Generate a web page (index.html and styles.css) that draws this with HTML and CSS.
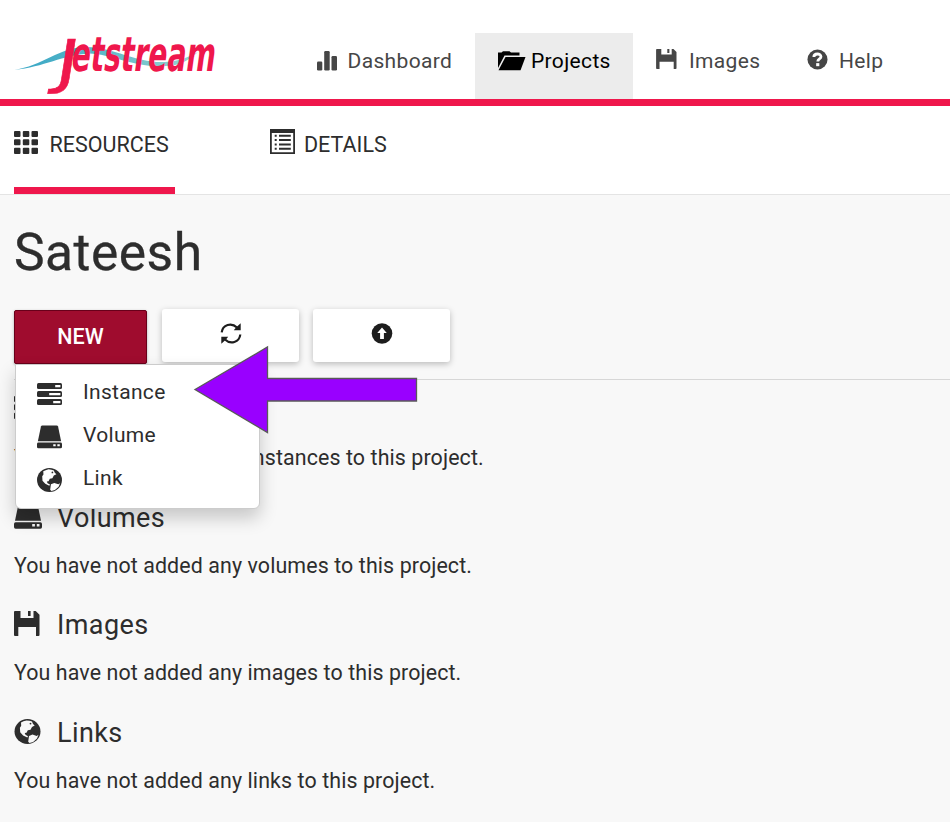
FILE: index.html
```html
<!DOCTYPE html>
<html lang="en">
<head>
<meta charset="utf-8">
<title>Jetstream - Projects</title>
<link rel="stylesheet" href="styles.css">
</head>
<body>
<svg class="sprite" aria-hidden="true">
  <symbol id="bars" viewBox="0 0 20 20"><rect x="0" y="10.5" width="5.3" height="9" rx="1.2"/><rect x="7.2" y="0" width="5.5" height="19.5" rx="1.2"/><rect x="14.5" y="5" width="5.5" height="14.5" rx="1.2"/></symbol>
  <symbol id="folder" viewBox="0 0 28 20"><path d="M0 17V1.5h3.5L5 .3h6.500l1.500 1.200h8.500V4.500H6.500z"/><path d="M7.500 6h20L22.500 19.300H.500z"/></symbol>
  <symbol id="floppy" viewBox="0 0 26 25"><path fill-rule="evenodd" d="M0 1Q0 0 1 0h5.500v7h13V0h2.200L25.500 3.800V24q0 1-1 1H22v-9H4.300v9H1q-1 0-1-1z"/><path d="M14 0h2.600v5H14z"/></symbol>
  <symbol id="help" viewBox="0 0 22 22"><circle cx="11" cy="11" r="10.500"/><path class="cut-line" d="M7.200 8.300C7.200 4.200 14.600 4.200 14.600 8c0 2.600-3.300 2.200-3.300 5.200" stroke-width="3"/><rect class="cut" x="9.600" y="14.800" width="3.300" height="3.200"/></symbol>
  <symbol id="grid" viewBox="0 0 24 23"><path d="M0 1q0-1 1-1h4.500q1 0 1 1v4q0 1-1 1H1Q0 6 0 5zM8.800 1q0-1 1-1h4.500q1 0 1 1v4q0 1-1 1H9.800q-1 0-1-1zM17.500 1q0-1 1-1H23q1 0 1 1v4q0 1-1 1h-4.500q-1 0-1-1zM0 9.300q0-1 1-1h4.500q1 0 1 1v4q0 1-1 1H1q-1 0-1-1zM8.800 9.300q0-1 1-1h4.500q1 0 1 1v4q0 1-1 1H9.800q-1 0-1-1zM17.500 9.300q0-1 1-1H23q1 0 1 1v4q0 1-1 1h-4.500q-1 0-1-1zM0 17.700q0-1 1-1h4.500q1 0 1 1V22q0 1-1 1H1q-1 0-1-1zM8.800 17.700q0-1 1-1h4.500q1 0 1 1V22q0 1-1 1H9.800q-1 0-1-1zM17.500 17.700q0-1 1-1H23q1 0 1 1V22q0 1-1 1h-4.500q-1 0-1-1z"/></symbol>
  <symbol id="list" viewBox="0 0 25 25"><path fill-rule="evenodd" d="M0 0h25v25H0zM1.800 4v19.200h21.400V4z"/><path d="M4.700 5.800h2v2h-2zM9 5.800h11.800v2H9zM4.700 10h2v2h-2zM9 10h11.800v2H9zM4.700 14.500h2v2h-2zM9 14.500h11.800v2H9zM4.700 18.700h2v2h-2zM9 18.700h11.800v2H9z"/></symbol>
  <symbol id="refresh" viewBox="0 0 22 21"><path class="line" d="M1.700 9.400C2.600 1.500 11.500-.800 17 4.500M20.300 11.500C19.400 19.400 10.500 21.800 5 16.500" stroke-width="2.200"/><path d="M20.700 .300v6.900H13.800l2.200-2.600zM1.300 20.700v-6.900h6.900l-2.200 2.600z"/></symbol>
  <symbol id="upload" viewBox="0 0 22 22"><circle cx="11" cy="11" r="10.800"/><path class="cut" d="M11 4.800l5 5.700h-3v6.200H9v-6.200H6z"/></symbol>
  <symbol id="server" viewBox="0 0 25 22"><rect width="25" height="6" rx="1.500"/><rect y="8" width="25" height="6" rx="1.500"/><rect y="16" width="25" height="6" rx="1.500"/><path class="cut" d="M18.200 2h5.200v2.200h-5.200zM12.200 10h11.200v2.200H12.200zM16.200 18h7.200v2.200h-7.200z"/></symbol>
  <symbol id="drive" viewBox="0 0 28 26"><path d="M6 0h16q1.300 0 1.600 1.300L27 17.800H1L4.400 1.300Q4.700 0 6 0z"/><rect y="19.200" width="28" height="6.500" rx="1.600"/><path class="cut" d="M18.200 21h2.700v2.400h-2.700zM22.800 21h2.700v2.400h-2.700z"/></symbol>
  <symbol id="globe" viewBox="0 0 26 25"><ellipse cx="13" cy="12.500" rx="13" ry="12.500"/><path class="cut" d="M6.500 3.400L9 2.300l3-.9 3 .300 2.500.800 1 2.500 1.700 1.400-2.700 1.500-1.500 2.800-2.700.500-1.300 2.500-1.800.3.800 1.800 2.500 1.500-.700 1.200-4.200-2-2.900-3.300-.3-4.500 1.300-2zM14.500 17l3.500-1.500 4.200 1.500 1.800-1.200-1.500 3.800-3.900 3.300-3.600 1.100-1.300-1.300z"/><circle cx="16" cy="4.600" r=".9"/></symbol>
</svg>

<header class="header">
  <a class="logo" aria-label="Jetstream">
    <svg width="206" height="66" viewBox="0 0 206 66">
      <defs><linearGradient id="wave"><stop offset="0" stop-color="#36a6c6"/><stop offset=".45" stop-color="#5ab7c7"/><stop offset="1" stop-color="#9bd5d3"/></linearGradient></defs>
      <path fill="url(#wave)" d="M0 38C28 34 46 15 72 15C104 16 120 31 151 30C166 29 175 25 184 20C173 30 164 34 151 34C120 36 98 22 75 21.500C49 23 30 35 0 38z"/>
      <g class="logo-text">
        <text class="logo-j" transform="translate(39.500 49.500) skewX(-9) scale(1.300 1)">J</text>
        <text class="logo-rest" transform="translate(56 38.500) skewX(-8)" textLength="144" lengthAdjust="spacingAndGlyphs">etstream</text>
      </g>
    </svg>
  </a>
  <nav class="nav">
    <a class="nav-item nav-dashboard"><svg class="i-bars"><use href="#bars"/></svg><span>Dashboard</span></a>
    <a class="nav-item nav-projects"><svg class="i-folder"><use href="#folder"/></svg><span>Projects</span></a>
    <a class="nav-item nav-images"><svg class="i-floppy"><use href="#floppy"/></svg><span>Images</span></a>
    <a class="nav-item nav-help"><svg class="i-help"><use href="#help"/></svg><span>Help</span></a>
  </nav>
</header>

<div class="tabs">
  <a class="tab active"><svg class="i-grid"><use href="#grid"/></svg><span>RESOURCES</span></a>
  <a class="tab details"><svg class="i-list"><use href="#list"/></svg><span>DETAILS</span></a>
</div>

<main class="content">
  <h1>Sateesh</h1>
  <div class="actions">
    <div class="dropdown">
      <button class="btn btn-new">NEW</button>
      <div class="menu">
        <a class="menu-item"><svg class="i-server"><use href="#server"/></svg><span>Instance</span></a>
        <a class="menu-item"><svg class="i-drive-sm"><use href="#drive"/></svg><span>Volume</span></a>
        <a class="menu-item"><svg class="i-globe-sm"><use href="#globe"/></svg><span>Link</span></a>
      </div>
      <svg class="pointer" width="226" height="90" viewBox="0 0 226 90"><path d="M2 44.500L74.500 2V33.500H223.500V56H74.500V87.500z"/></svg>
    </div>
    <button class="btn btn-icon"><svg class="i-round"><use href="#refresh"/></svg></button>
    <button class="btn btn-icon"><svg class="i-round"><use href="#upload"/></svg></button>
  </div>

  <section><h2><svg class="i-grid"><use href="#grid"/></svg><span>Instances</span></h2><p>You have not added any instances to this project.</p></section>
  <section><h2><svg class="i-drive"><use href="#drive"/></svg><span>Volumes</span></h2><p>You have not added any volumes to this project.</p></section>
  <section><h2><svg class="i-disk"><use href="#floppy"/></svg><span>Images</span></h2><p>You have not added any images to this project.</p></section>
  <section><h2><svg class="i-globe"><use href="#globe"/></svg><span>Links</span></h2><p>You have not added any links to this project.</p></section>
</main>
</body>
</html>
```
FILE: styles.css
```css
* { box-sizing: border-box; }
html, body { height: 100%; }
body { margin: 0; overflow: hidden; background: #f8f8f8; color: #2d2d2d; font-family: Roboto, sans-serif; font-size: 21px; }
svg { flex: none; fill: currentColor; }
.sprite { position: absolute; width: 0; height: 0; }
.cut { fill: var(--cut, #fff); }
.cut-line { fill: none; stroke: #fff; }
.line { fill: none; stroke: currentColor; }

.header { display: flex; height: 106px; background: #fff; border-bottom: 7px solid #ef174c; }
.logo { width: 301px; padding: 32px 0 0 14px; }
.logo svg { display: block; overflow: visible; }
.logo-text { fill: #ef174c; stroke: #ef174c; }
.logo-j { font: 400 59px "DejaVu Sans", sans-serif; stroke-width: .5px; }
.logo-rest { font: 700 48px "DejaVu Sans", sans-serif; stroke-width: 0; }
.nav { display: flex; padding-top: 33px; color: #464646; }
.nav-item { display: flex; align-items: center; height: 66px; padding-bottom: 10px; letter-spacing: .35px; }
.nav-dashboard { width: 174px; padding-left: 16px; gap: 10.500px; }
.nav-projects { width: 158px; padding-left: 23px; gap: 5px; background: #ececec; color: #000; }
.nav-images { width: 151px; padding-left: 23px; gap: 12px; }
.nav-help { padding-left: 23px; gap: 11px; }
.i-bars { width: 20px; height: 20px; }
.i-folder { width: 28px; height: 20px; }
.i-floppy { width: 21px; height: 20px; margin-bottom: 5px; }
.i-help { width: 21px; height: 21px; margin-bottom: 3px; }

.tabs { display: flex; height: 89px; padding-left: 14px; background: #fff; border-bottom: 1px solid #e4e4e4; font-size: 21.500px; }
.tab { display: flex; align-items: center; padding-bottom: 11px; height: 88px; }
.tab.active { width: 161px; gap: 11.500px; padding-bottom: 4px; border-bottom: 7px solid #ef174c; }
.details { margin-left: 95px; gap: 9px; }
.i-grid { width: 24px; height: 23px; margin-bottom: 5px; }
.tab .i-grid { margin-bottom: 4px; }
.i-list { width: 25px; height: 25px; margin-bottom: 6px; }

.content { padding: 25px 0 0 14px; }
h1 { margin: 0; height: 65px; line-height: 66px; font-size: 51.500px; font-weight: 400; letter-spacing: .5px; -webkit-text-stroke: .3px currentColor; }
.actions { display: flex; height: 95px; padding-top: 24px; border-bottom: 1px solid #d7d7d7; }
.dropdown { position: relative; margin-right: 15px; }
.btn { display: flex; align-items: center; justify-content: center; padding: 0; height: 53px; border: 0; font: 500 21px Roboto, sans-serif; }
.btn-new { width: 133px; height: 54px; margin-top: 1px; padding-bottom: 1px; background: #9f0c2e; border: 1px solid #69001a; border-radius: 2px; color: #fff; box-shadow: 0 1px 3px rgba(0,0,0,.3); font-size: 21.500px; }
.btn-icon { width: 137px; margin-right: 14px; padding: 0 0 4px; border-radius: 3px; background: #fff; color: #1d1d1d; box-shadow: 0 2px 6px rgba(0,0,0,.25); }
.i-round { width: 22px; height: 21px; }
.menu { position: absolute; z-index: 2; top: 55px; left: 1px; width: 245px; height: 145px; padding: 5px 0 0 21px; background: #fff; border: 1px solid #ccc; border-radius: 0 0 6px 6px; box-shadow: 0 9px 18px rgba(0,0,0,.2); }
.menu-item { display: flex; align-items: center; height: 43px; gap: 21px; letter-spacing: .3px; }
.menu-item svg { width: 25px; margin-top: 5px; }
.i-server { height: 22px; }
.i-drive-sm { height: 24px; }
.i-globe-sm { height: 24px; }
.pointer { position: absolute; z-index: 3; left: 179px; top: 36px; fill: #90f; stroke: #595959; stroke-width: 1.300px; }

section { height: 107.600px; --cut: #f8f8f8; }
.actions + section { margin-top: 10px; }
h2 { display: flex; align-items: center; height: 40px; margin: 0 0 8px; font-size: 27px; font-weight: 400; }
h2 span { margin-left: auto; width: 893px; letter-spacing: .4px; }
h2 svg { margin-bottom: 3px; }
p { margin: 0; height: 40px; line-height: 39px; font-size: 21.400px; letter-spacing: .1px; }
.i-drive { width: 28px; height: 26px; }
.i-disk { width: 26px; height: 25px; }
.i-globe { width: 27px; height: 25px; }
```
